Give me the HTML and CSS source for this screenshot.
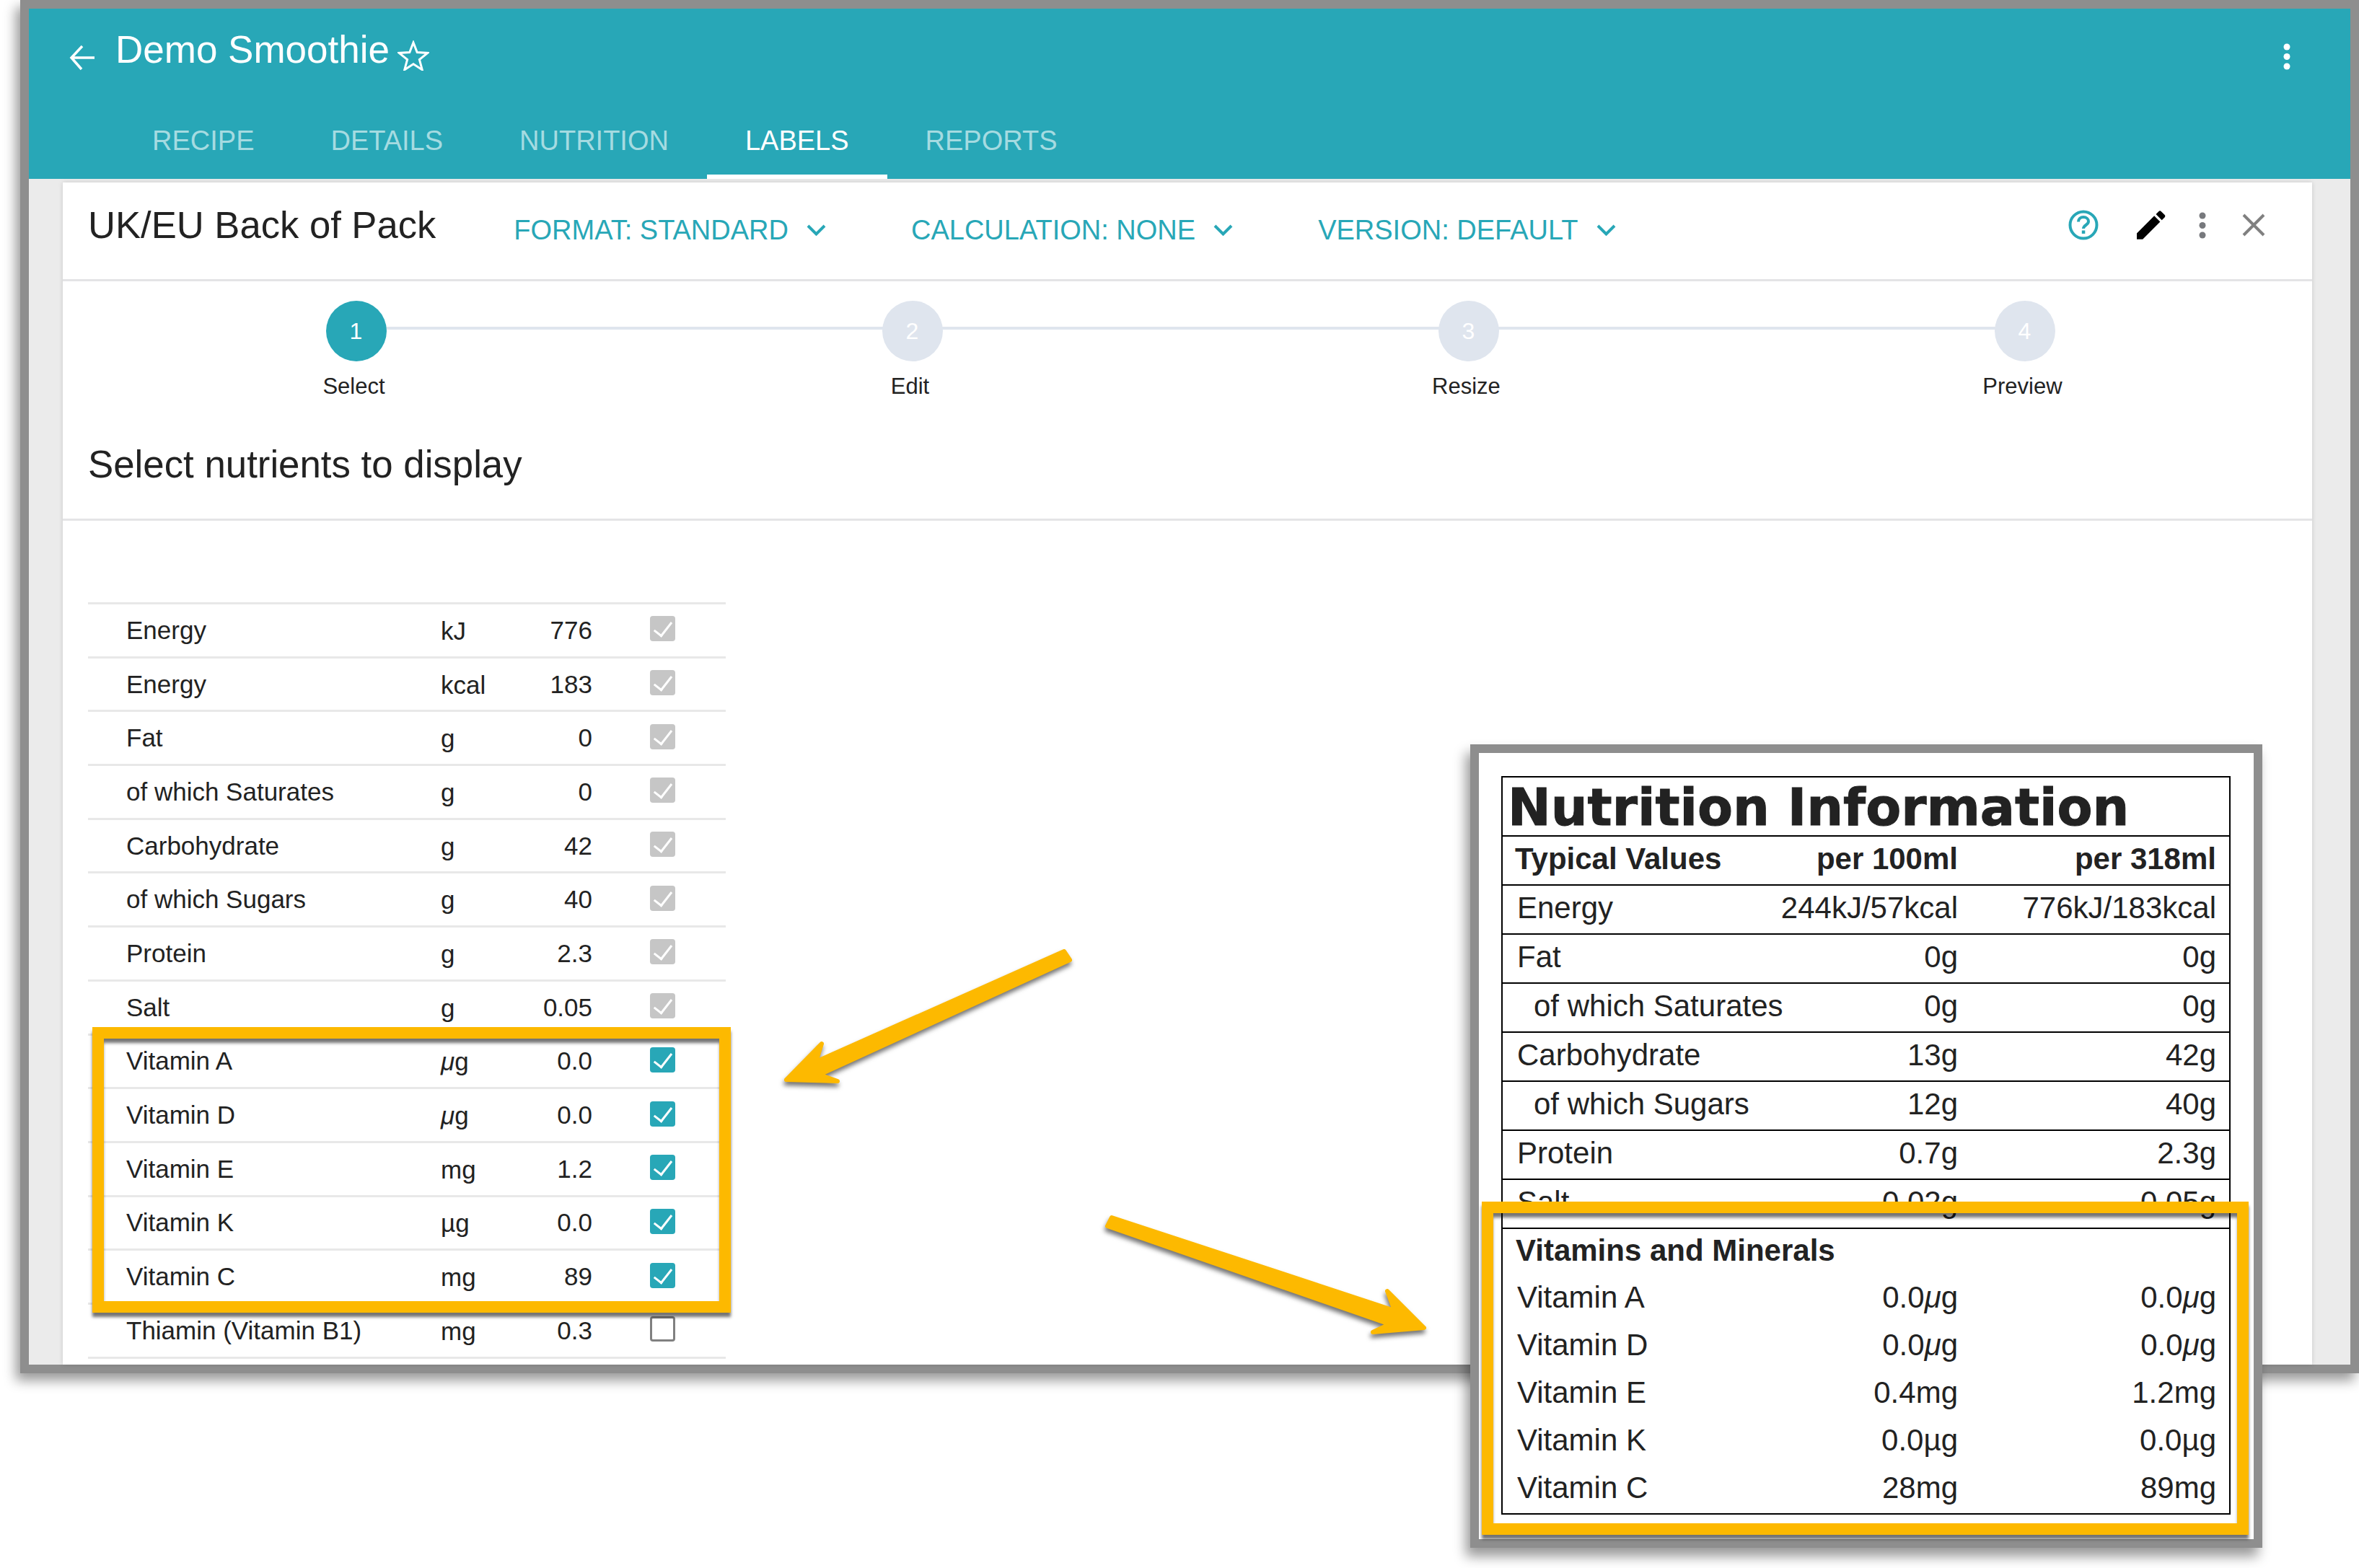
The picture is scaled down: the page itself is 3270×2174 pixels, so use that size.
FILE: index.html
```html
<!DOCTYPE html>
<html lang="en">
<head>
    <meta charset="utf-8">
    <title>Demo Smoothie - Labels</title>
    <link rel="stylesheet" href="styles.css">
</head>
<body>
    <div class="frame">
        <header class="appbar">
            <div class="toolbar">
                <svg class="back" viewBox="0 0 36 36"><path d="M35 18H3M18 2 3 18l14 16"/></svg>
                <span class="recipe-name">Demo Smoothie</span>
                <svg class="star" viewBox="0 0 44 42"><path d="M22 3l5.2 13.6 14.6.8-11.4 9.2 3.8 14.1L22 32.8 9.8 40.700l3.800-14.100L2.200 17.400l14.600-.8z"/></svg>
                <svg class="kebab" viewBox="0 0 10 37"><circle cx="5" cy="5" r="4.500"/><circle cx="5" cy="18.500" r="4.500"/><circle cx="5" cy="32" r="4.500"/></svg>
            </div>
            <nav class="tabs">
                <a class="tab">RECIPE</a>
                <a class="tab">DETAILS</a>
                <a class="tab">NUTRITION</a>
                <a class="tab current">LABELS</a>
                <a class="tab">REPORTS</a>
            </nav>
        </header>

        <main class="card">
            <div class="card-head">
                <h1 class="card-title">UK/EU Back of Pack</h1>
                <a class="drop">FORMAT: STANDARD<svg class="chev" viewBox="0 0 27 16"><path d="M2 2l11.500 11.500L25 2"/></svg></a>
                <a class="drop">CALCULATION: NONE<svg class="chev" viewBox="0 0 27 16"><path d="M2 2l11.500 11.500L25 2"/></svg></a>
                <a class="drop">VERSION: DEFAULT<svg class="chev" viewBox="0 0 27 16"><path d="M2 2l11.500 11.500L25 2"/></svg></a>
                <div class="card-icons">
                    <svg class="ico-help" viewBox="0 0 42 42">
                        <circle cx="21" cy="21" r="18.500"/>
                        <path d="M14 16.500c0-4 3-6.500 7-6.500s7 2.500 7 6c0 5-7 5-7 10"/>
                        <rect x="18.800" y="28.500" width="4.500" height="4.500"/>
                    </svg>
                    <svg class="ico-edit" viewBox="3 3 18.300 18"><path d="M3 17.250V21h3.750L17.810 9.940l-3.750-3.750L3 17.250zM20.710 7.040c.39-.39.39-1.020 0-1.410l-2.340-2.340c-.39-.39-1.020-.39-1.410 0l-1.830 1.830 3.750 3.750 1.830-1.830z"/></svg>
                    <svg class="ico-more" viewBox="0 0 10 37"><circle cx="5" cy="5" r="4.500"/><circle cx="5" cy="18.500" r="4.500"/><circle cx="5" cy="32" r="4.500"/></svg>
                    <svg class="ico-close" viewBox="0 0 32 32"><path d="M2 2l28 28M30 2 2 30"/></svg>
                </div>
            </div>

            <ol class="stepper">
                <li class="step active"><span class="dot">1</span><span class="step-name">Select</span></li>
                <li class="step"><span class="dot">2</span><span class="step-name">Edit</span></li>
                <li class="step"><span class="dot">3</span><span class="step-name">Resize</span></li>
                <li class="step"><span class="dot">4</span><span class="step-name">Preview</span></li>
            </ol>

            <h2 class="section-title">Select nutrients to display</h2>

            <div class="nutrients">
                <div class="row"><span>Energy</span><span class="unit">kJ</span><span class="val">776</span><span class="cb locked"></span></div>
                <div class="row"><span>Energy</span><span class="unit">kcal</span><span class="val">183</span><span class="cb locked"></span></div>
                <div class="row"><span>Fat</span><span class="unit">g</span><span class="val">0</span><span class="cb locked"></span></div>
                <div class="row"><span>of which Saturates</span><span class="unit">g</span><span class="val">0</span><span class="cb locked"></span></div>
                <div class="row"><span>Carbohydrate</span><span class="unit">g</span><span class="val">42</span><span class="cb locked"></span></div>
                <div class="row"><span>of which Sugars</span><span class="unit">g</span><span class="val">40</span><span class="cb locked"></span></div>
                <div class="row"><span>Protein</span><span class="unit">g</span><span class="val">2.3</span><span class="cb locked"></span></div>
                <div class="row"><span>Salt</span><span class="unit">g</span><span class="val">0.05</span><span class="cb locked"></span></div>
                <div class="row"><span>Vitamin A</span><span class="unit"><i>μ</i>g</span><span class="val">0.0</span><span class="cb on"></span></div>
                <div class="row"><span>Vitamin D</span><span class="unit"><i>μ</i>g</span><span class="val">0.0</span><span class="cb on"></span></div>
                <div class="row"><span>Vitamin E</span><span class="unit">mg</span><span class="val">1.2</span><span class="cb on"></span></div>
                <div class="row"><span>Vitamin K</span><span class="unit">µg</span><span class="val">0.0</span><span class="cb on"></span></div>
                <div class="row"><span>Vitamin C</span><span class="unit">mg</span><span class="val">89</span><span class="cb on"></span></div>
                <div class="row"><span>Thiamin (Vitamin B1)</span><span class="unit">mg</span><span class="val">0.3</span><span class="cb"></span></div>
            </div>
        </main>
    </div>

    <!-- preview of the label, sits over the page -->
    <section class="label-box">
        <div class="label">
            <div class="label-title">Nutrition Information</div>
            <div class="lrow head"><span>Typical Values</span><span>per 100ml</span><span>per 318ml</span></div>
            <div class="lrow"><span>Energy</span><span>244kJ/57kcal</span><span>776kJ/183kcal</span></div>
            <div class="lrow"><span>Fat</span><span>0g</span><span>0g</span></div>
            <div class="lrow sub"><span>of which Saturates</span><span>0g</span><span>0g</span></div>
            <div class="lrow"><span>Carbohydrate</span><span>13g</span><span>42g</span></div>
            <div class="lrow sub"><span>of which Sugars</span><span>12g</span><span>40g</span></div>
            <div class="lrow"><span>Protein</span><span>0.7g</span><span>2.3g</span></div>
            <div class="lrow"><span>Salt</span><span>0.02g</span><span>0.05g</span></div>
            <div class="vitamins">
                <div class="vit-title">Vitamins and Minerals</div>
                <div class="vrow"><span>Vitamin A</span><span>0.0<i>μ</i>g</span><span>0.0<i>μ</i>g</span></div>
                <div class="vrow"><span>Vitamin D</span><span>0.0<i>μ</i>g</span><span>0.0<i>μ</i>g</span></div>
                <div class="vrow"><span>Vitamin E</span><span>0.4mg</span><span>1.2mg</span></div>
                <div class="vrow"><span>Vitamin K</span><span>0.0µg</span><span>0.0µg</span></div>
                <div class="vrow"><span>Vitamin C</span><span>28mg</span><span>89mg</span></div>
            </div>
        </div>
    </section>

    <!-- annotations -->
    <div class="mark mark-left"></div>
    <div class="mark mark-right"></div>
    <svg class="arrows" viewBox="0 0 3270 2174">
        <path d="M1475 1319 1131 1472 1139 1447 1090 1497 1161 1499 1136 1490 1483 1331z"/>
        <path d="M1541 1688 1933 1817 1923 1790 1974 1841 1903 1847 1926 1836 1535 1700z"/>
    </svg>
</body>
</html>
```

FILE: styles.css
```css
* {
    box-sizing: border-box;
}

html,
body {
    margin: 0;
    padding: 0;
}

body {
    position: relative;
    width: 3270px;
    height: 2174px;
    overflow: hidden;
    background: #fff;
    color: #222;
    font-family: "Liberation Sans", Arial, sans-serif;
}

/* app window */
.frame {
    display: flex;
    flex-direction: column;
    width: 3242px;
    height: 1904px;
    margin-left: 28px;
    border: 12px solid #8e8e8e;
    background: #ebebeb;
    box-shadow: -6px 10px 16px rgba(0, 0, 0, .4);
}

.appbar {
    flex: none;
    height: 236px;
    background: #28a7b7;
    color: #fff;
}

.toolbar {
    display: flex;
    align-items: center;
    height: 126px;
    padding: 0 83px 0 56px;
}

.back {
    width: 36px;
    height: 36px;
    margin: 10px 28px 0 0;
    fill: none;
    stroke: #fff;
    stroke-width: 3.500;
}

.recipe-name {
    margin-bottom: 14px;
    font-size: 53px;
}

.star {
    width: 44px;
    height: 42px;
    margin: 4px 0 0 11px;
    fill: none;
    stroke: #fff;
    stroke-width: 3;
}

.kebab {
    width: 10px;
    height: 37px;
    margin: 7px 0 0 auto;
    fill: #fff;
}

.tabs {
    display: flex;
    height: 110px;
    padding-left: 118px;
}

.tab {
    padding: 34px 53px 0;
    border-bottom: 6px solid transparent;
    color: #a5dbe1;
    font-size: 38px;
    line-height: 46px;
}

.tab.current {
    border-bottom-color: #fff;
    color: #fff;
}

/* white card */
.card {
    flex: 1;
    min-height: 0;
    margin: 5px 53px 0 47px;
    overflow: hidden;
    background: #fff;
    box-shadow: 0 0 6px rgba(0, 0, 0, .15);
}

.card-head {
    display: flex;
    align-items: flex-start;
    height: 137px;
    padding: 0 65px 0 35px;
    border-bottom: 3px solid #e4e4e6;
}

.card-title {
    margin: 27px 108px 0 0;
    font-size: 52.600px;
    font-weight: 400;
    line-height: 64px;
}

.drop {
    display: flex;
    align-items: center;
    margin: 44px 118px 0 0;
    color: #28a7b7;
    font-size: 38px;
    line-height: 44px;
}

.chev {
    width: 27px;
    height: 16px;
    margin-left: 25px;
    fill: none;
    stroke: #28a7b7;
    stroke-width: 4;
}

.card-icons {
    display: flex;
    align-items: center;
    margin: 38px 0 0 auto;
}

.ico-help {
    width: 42px;
    height: 42px;
    margin-right: 53px;
    fill: none;
    stroke: #28a7b7;
    stroke-width: 4;
}

.ico-help rect {
    fill: #28a7b7;
    stroke: none;
}

.ico-edit {
    width: 40px;
    height: 40px;
    margin-right: 46px;
}

.ico-more {
    width: 10px;
    height: 37px;
    margin-right: 50px;
    fill: #77797d;
}

.ico-close {
    width: 32px;
    height: 32px;
    stroke: #808080;
    stroke-width: 4;
}

/* stepper */
.stepper {
    display: flex;
    margin: 0;
    padding: 27px 0 0 21px;
    list-style: none;
}

.step {
    position: relative;
    display: flex;
    flex-direction: column;
    align-items: center;
    width: 771px;
}

.step:not(:last-child)::after {
    content: "";
    position: absolute;
    top: 36px;
    left: 385px;
    width: 771px;
    height: 4px;
    background: #dfe5ee;
}

.dot {
    position: relative;
    z-index: 1;
    display: flex;
    align-items: center;
    justify-content: center;
    width: 84px;
    height: 84px;
    border-radius: 50%;
    background: #dfe5ee;
    color: #fff;
    font-size: 32px;
}

.step.active .dot {
    background: #28a7b7;
}

.step-name {
    margin: 17px 6px 0 0;
    font-size: 31px;
    line-height: 36px;
}

.section-title {
    height: 168px;
    margin: 0;
    padding: 57px 0 0 35px;
    border-bottom: 3px solid #e4e4e6;
    font-size: 52.800px;
    font-weight: 400;
    line-height: 66px;
}

/* nutrient table */
.nutrients {
    width: 884px;
    margin: 113px 0 0 35px;
    border-top: 3px solid #e8e8e8;
}

.row {
    display: grid;
    grid-template-columns: 436px 90px 120px 35px;
    align-items: center;
    height: 74.700px;
    padding-left: 53px;
    border-bottom: 3px solid #e8e8e8;
    font-size: 35px;
}

.unit {
    padding-top: 2px;
}

.val {
    text-align: right;
}

.cb {
    display: flex;
    align-items: center;
    justify-content: center;
    width: 35px;
    height: 35px;
    margin: -4px 0 0 80px;
    border: 3px solid #808080;
    border-radius: 4px;
}

.cb.locked,
.cb.on {
    border: 0;
}

.cb.locked {
    background: #c6c6c6;
}

.cb.on {
    background: #28a7b7;
}

.cb.locked::after,
.cb.on::after {
    content: "";
    width: 11px;
    height: 22px;
    margin-top: -4px;
    border: solid #fff;
    border-width: 0 3px 3px 0;
    transform: rotate(38deg);
}

/* label preview */
.label-box {
    position: absolute;
    top: 1032px;
    left: 2038px;
    width: 1098px;
    height: 1114px;
    padding: 32px 31px 0 31px;
    border: 12px solid #8e8e8e;
    background: #fff;
    box-shadow: -6px 12px 16px rgba(0, 0, 0, .4);
}

.label {
    width: 1011px;
    height: 1024px;
    border: 2.500px solid #000;
    color: #222;
}

.label-title {
    height: 80px;
    padding-left: 7px;
    font-family: "DejaVu Sans", "Liberation Sans", sans-serif;
    font-size: 71.400px;
    font-weight: 700;
    line-height: 84px;
    white-space: nowrap;
    -webkit-text-stroke: 1px #222;
}

.lrow,
.vrow {
    display: grid;
    grid-template-columns: minmax(0, 1fr) 270px 358px;
    align-items: center;
    padding: 0 18px 0 20px;
    font-size: 42px;
    white-space: nowrap;
}

.lrow {
    height: 68px;
    padding-bottom: 4px;
    border-top: 2.500px solid #000;
    overflow: hidden;
}

.vrow {
    height: 66px;
}

.lrow span:not(:first-child),
.vrow span:not(:first-child) {
    text-align: right;
}

.lrow.head {
    padding-left: 17px;
    font-weight: 700;
}

.lrow.sub {
    padding-left: 43px;
}

.vitamins {
    height: 399px;
    border-top: 2.500px solid #000;
}

.vit-title {
    height: 62px;
    padding-left: 18px;
    font-size: 42px;
    font-weight: 700;
    line-height: 60px;
}

/* orange annotation boxes and arrows */
.mark {
    position: absolute;
    border: 16px solid #fdb900;
    box-shadow: 0 6px 4px rgba(0, 0, 0, .55), inset 0 7px 4px -1px rgba(0, 0, 0, .55);
}

.mark-left {
    top: 1424px;
    left: 128px;
    width: 885px;
    height: 396px;
}

.mark-right {
    top: 1666px;
    left: 2054px;
    width: 1063px;
    height: 462px;
}

.arrows {
    position: absolute;
    top: 0;
    left: 0;
    width: 3270px;
    height: 2174px;
    fill: #fdb900;
    stroke: #fdb900;
    stroke-width: 6;
    stroke-linejoin: round;
    filter: drop-shadow(-1px 5px 3px rgba(0, 0, 0, .55));
}
```
